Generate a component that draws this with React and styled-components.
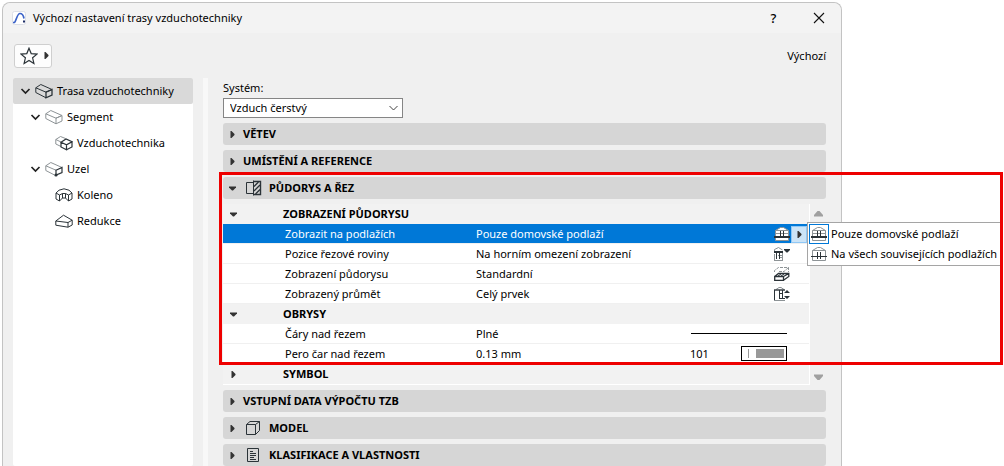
import React from 'react'
import styled, { createGlobalStyle, css } from 'styled-components'

const colors = {
  text: '#000000',
  panel: '#f0f0f0',
  header: '#d6d6d6',
  selected: '#d9d9d9',
  blue: '#0078d7',
  red: '#ee0000',
  ink: '#2b3338',
  inkLight: '#8d9396'
}

const tree = [
  { label: 'Trasa vzduchotechniky', level: 0, open: true, selected: true, icon: 'duct' },
  { label: 'Segment', level: 1, open: true, icon: 'segment' },
  { label: 'Vzduchotechnika', level: 2, icon: 'hvac' },
  { label: 'Uzel', level: 1, open: true, icon: 'node' },
  { label: 'Koleno', level: 2, icon: 'elbow' },
  { label: 'Redukce', level: 2, icon: 'reducer' }
]

const GlobalStyle = createGlobalStyle`
  * {
    box-sizing: border-box;
  }
  body {
    margin: 0;
    background: #fff;
    overflow: hidden;
  }
  body, button, select {
    font-family: 'Noto Sans', 'Open Sans', sans-serif;
    font-size: 11px;
    line-height: 16px;
    color: ${colors.text};
  }
`

const Icon = ({ name }) => {
  switch (name) {
    case 'duct':
      return (
        <Svg width='18' height='16' viewBox='0 0 18 16'>
          <path d='M.8 4.8 5.8 1.5 17 6.5 11 9.2zM.8 4.8V9.5L11 14.8' />
          <path d='M11 9.2 17 6.5V12L11 14.8z' strokeWidth='1.3' />
        </Svg>
      )
    case 'segment':
      return (
        <Svg width='18' height='16' viewBox='0 0 18 16' $light>
          <path d='M.8 4.8 5.8 1.5 17 6.5 11 9.2zM.8 4.8V9.5L11 14.8' />
          <path d='M11 9.2 17 6.5V12L11 14.8z' />
        </Svg>
      )
    case 'hvac':
      return (
        <Svg width='18' height='16' viewBox='0 0 18 16'>
          <path stroke={colors.inkLight} d='M6 11.5.8 9V4.5L5.5 1.5 10.5 3.5M.8 4.5 6 7' />
          <path d='M6 7.2 11 4 17 6.8 11.5 9.8zM6 7.2V12L11.5 14.8V9.8M11.5 14.8 17 12V6.8' strokeWidth='1.2' />
        </Svg>
      )
    case 'node':
      return (
        <Svg width='18' height='16' viewBox='0 0 18 16'>
          <path stroke={colors.inkLight} d='M11 9.2.8 4.8 5.8 1.5 17 6.5M.8 4.8V9.5L9.5 14' />
          <path d='M11 9.2 17 6.5V11.5L11 14z' strokeWidth='1.2' />
          <circle cx='11' cy='14' r='1.6' fill={colors.ink} stroke='none' />
        </Svg>
      )
    case 'elbow':
      return (
        <Svg width='18' height='16' viewBox='0 0 18 16'>
          <path d='M1 6 4 3.2 9 1.8 14 3.2 17 6V12L13.5 14 10.5 11H7.5L4.5 14 1 12z' />
          <path d='M1 6 4.5 8 7.5 6.5H10.5L13.5 8 17 6M4.5 8V14M13.5 8V14M7.5 6.5V11M10.5 6.5V11' />
        </Svg>
      )
    case 'reducer':
      return (
        <Svg width='18' height='16' viewBox='0 0 18 16'>
          <path d='M.8 8 8.5 2.2 17.2 7.2V12L13 14.2.8 12.2zM.8 8 13 9.5 17.2 7.2M13 9.5V14.2' />
        </Svg>
      )
    case 'plan':
      return (
        <Svg width='17' height='16' viewBox='0 0 17 16'>
          <path d='M8 2.5H1.5V13.5H8M8.5 .5V15.5' />
          <path d='M8.5 1.5H15.5V14.5H8.5' strokeWidth='1.4' />
          <path d='M9 6.5 13.5 2M9 11 15 5M10.5 14 15 9.5' strokeWidth='1.3' />
        </Svg>
      )
    case 'cube':
      return (
        <Svg width='17' height='16' viewBox='0 0 17 16'>
          <path d='M1.5 4.5H10.5V14.5H1.5zM1.5 4.5 5 1.5H14.5L10.5 4.5M14.5 1.5V10.5L10.5 14.5' />
        </Svg>
      )
    case 'list':
      return (
        <Svg width='17' height='16' viewBox='0 0 17 16'>
          <path d='M2.5 1.5H13.5V14.5H2.5zM5 4.5H8M5 6.5H11M5 8.5H11M5 10.5H9M5 12.5H11' />
        </Svg>
      )
    case 'story':
      return (
        <Svg width='16' height='16' viewBox='0 0 16 16'>
          <path d='M1.5 14.5V4.5L6.5 1.5H9.5L14.5 4.5V14.5z' stroke={colors.inkLight} />
          <path d='M1.5 4.5H14.5M2 7.5H14' stroke={colors.inkLight} />
          <path d='M6.5 5V10M9.5 5V10' />
          <path d='M0 11H16' strokeWidth='2' />
        </Svg>
      )
    case 'allStories':
      return (
        <Svg width='16' height='16' viewBox='0 0 16 16'>
          <path d='M1.5 14.5V4.5L6.5 1.5H9.5L14.5 4.5V14.5z' stroke={colors.inkLight} />
          <path d='M1.5 4.5H14.5' stroke={colors.inkLight} />
          <path d='M6.5 6V13M9.5 6V13M0 10.5H16' />
        </Svg>
      )
    case 'cut':
      return (
        <Svg width='16' height='16' viewBox='0 0 16 16'>
          <path d='M.5 5V3.5L4.5 1.5 8.5 4M.5 8V14.5M0 14.5H9M5 11.5H9M8.5 7V14.5M4 9.5H8' stroke={colors.inkLight} />
          <path d='M0 6H9' strokeWidth='2' />
          <path d='M2.5 7V13M5.5 7V13' />
          <path d='M10 3H16V4L13.5 6.5H12.5L10 4z' fill={colors.ink} stroke='none' />
        </Svg>
      )
    case 'floor':
      return (
        <Svg width='16' height='16' viewBox='0 0 16 16'>
          <path d='M.5 6V4.5L4.5 1.5H14.5V6' stroke={colors.inkLight} strokeDasharray='3 1' />
          <path d='M5 5.5H10L14.5 1.5' stroke={colors.inkLight} strokeDasharray='3 1' />
          <path d='M.7 10.5H9.5V14.3H.7zM.7 10.5 4.5 7.5H14.8V10.5L9.5 14.3M9.5 10.5 14.8 7.5' strokeWidth='1.3' />
          <path d='M4 10 7 8M7 10 10 8' />
        </Svg>
      )
    case 'projection':
      return (
        <Svg width='16' height='16' viewBox='0 0 16 16'>
          <path d='M2 3.5 5 1.5H7L10 3.5M0 14.5H11' stroke={colors.inkLight} />
          <path d='M0 4H11' strokeWidth='1.4' />
          <path d='M.5 4V14M5.5 4V12M8.5 4V12M5.5 7.5H8.5M5 12.5H11' />
          <path d='M10 7 13 4 16 7zM10 10H16L13 13z' fill={colors.ink} stroke='none' />
        </Svg>
      )
    default:
      return null
  }
}

const Triangle = ({ dir }) => (
  <svg width='9' height='9' viewBox='0 0 9 9' fill='#333'>
    {dir === 'down' ? <path d='M1 2.5H8V3.5L5 6.5H4L1 3.5z' /> : <path d='M2.5 1H3.5L6.5 4V5L3.5 8H2.5z' />}
  </svg>
)

const Section = ({ title, icon, open }) => (
  <SectionHeader aria-expanded={!!open}>
    <Triangle dir={open ? 'down' : 'right'} />
    {icon && <Icon name={icon} />}
    <span>{title}</span>
  </SectionHeader>
)

const GroupRow = ({ title, open }) => (
  <Group>
    <th>
      <GroupToggle aria-label={title} aria-expanded={!!open}>
        <Triangle dir={open ? 'down' : 'right'} />
      </GroupToggle>
    </th>
    <th colSpan='3'>{title}</th>
  </Group>
)

const PropertyRow = ({ name, value, selected, children }) => (
  <Property $selected={selected}>
    <td />
    <td>{name}</td>
    <td>{value}</td>
    <Control>{children}</Control>
  </Property>
)

export default function App () {
  return (
    <Page>
      <GlobalStyle />
      <Dialog>
        <TitleBar>
          <svg width='14' height='14' viewBox='0 0 14 14'>
            <rect x='.5' y='.5' width='13' height='13' rx='2' fill='#fff' stroke='#dcdfe6' />
            <path d='M1 11.5H2.5C4.5 9.500 5 2.500 8 2.500 10.500 2.500 11.500 4.500 12 7.500' fill='none' stroke='#3c63c8' strokeWidth='1.7' />
            <path d='M11 9.5H13V11.5H11z' fill='#1d2c66' />
          </svg>
          <Title>Výchozí nastavení trasy vzduchotechniky</Title>
          <TitleButton aria-label='Nápověda'>
            <HelpMark>?</HelpMark>
          </TitleButton>
          <TitleButton aria-label='Zavřít'>
            <svg width='12' height='12' viewBox='0 0 12 12' fill='none' stroke='#111' strokeWidth='1.1'>
              <path d='M1 1 11 11M11 1 1 11' />
            </svg>
          </TitleButton>
        </TitleBar>

        <Toolbar>
          <FavoriteButton aria-label='Oblíbené'>
            <svg width='18' height='18' viewBox='0 0 18 18' fill='none' stroke={colors.ink} strokeWidth='1.2'>
              <path d='M9 1.2 11.2 6.6 17 7.1 12.6 10.8 13.9 16.4 9 13.4 4.1 16.4 5.4 10.8 1 7.1 6.8 6.6z' />
            </svg>
            <Triangle dir='right' />
          </FavoriteButton>
          <span>Výchozí</span>
        </Toolbar>

        <Body>
          <Tree>
            {tree.map(item => (
              <TreeItem key={item.label} $level={item.level} $selected={item.selected}>
                {item.open && (
                  <svg width='11' height='8' viewBox='0 0 11 8' fill='none' stroke='#222' strokeWidth='1.7'>
                    <path d='M1.5 2 5.5 6 9.5 2' />
                  </svg>
                )}
                <Icon name={item.icon} />
                <span>{item.label}</span>
              </TreeItem>
            ))}
          </Tree>
          <Splitter />
          <Settings>
            <label htmlFor='system'>Systém:</label>
            <SelectBox>
              <select id='system'>
                <option>Vzduch čerstvý</option>
              </select>
              <svg width='11' height='8' viewBox='0 0 11 8' fill='none' stroke='#444'>
                <path d='M1.5 2 5.5 6 9.5 2' />
              </svg>
            </SelectBox>

            <Sections>
              <Section title='VĚTEV' />
              <Section title='UMÍSTĚNÍ A REFERENCE' />
              <OpenSection>
                <Section title='PŮDORYS A ŘEZ' icon='plan' open />
                <Scroller>
                  <Properties>
                    <colgroup>
                      <col width='60' />
                      <col width='191' />
                      <col />
                      <col width='132' />
                    </colgroup>
                    <tbody>
                      <GroupRow title='ZOBRAZENÍ PŮDORYSU' open />
                      <PropertyRow name='Zobrazit na podlažích' value='Pouze domovské podlaží' selected>
                        <IconPlate><Icon name='story' /></IconPlate>
                        <MenuButton aria-label='Zobrazit na podlažích'>
                          <Triangle dir='right' />
                        </MenuButton>
                        <Menu role='menu'>
                          <MenuItem role='menuitem'>
                            <MenuIcon $checked><Icon name='story' /></MenuIcon>
                            Pouze domovské podlaží
                          </MenuItem>
                          <MenuItem role='menuitem'>
                            <MenuIcon><Icon name='allStories' /></MenuIcon>
                            Na všech souvisejících podlažích
                          </MenuItem>
                        </Menu>
                      </PropertyRow>
                      <PropertyRow name='Pozice řezové roviny' value='Na horním omezení zobrazení'>
                        <Icon name='cut' />
                      </PropertyRow>
                      <PropertyRow name='Zobrazení půdorysu' value='Standardní'>
                        <Icon name='floor' />
                      </PropertyRow>
                      <PropertyRow name='Zobrazený průmět' value='Celý prvek'>
                        <Icon name='projection' />
                      </PropertyRow>
                      <GroupRow title='OBRYSY' open />
                      <PropertyRow name='Čáry nad řezem' value='Plné'>
                        <LineSample />
                      </PropertyRow>
                      <PropertyRow name='Pero čar nad řezem' value='0.13 mm'>
                        <Pen>
                          <span>101</span>
                          <PenSwatch />
                        </Pen>
                      </PropertyRow>
                      <GroupRow title='SYMBOL' />
                    </tbody>
                  </Properties>
                  <ScrollBar>
                    <svg width='9' height='7' viewBox='0 0 9 7' fill='#a0a0a0'>
                      <path d='M0 6.5V5L3.5 1H5.5L9 5V6.5z' />
                    </svg>
                    <svg width='9' height='7' viewBox='0 0 9 7' fill='#a0a0a0'>
                      <path d='M0 .5V2L3.5 6H5.5L9 2V.5z' />
                    </svg>
                  </ScrollBar>
                </Scroller>
                <Highlight />
              </OpenSection>
              <Section title='VSTUPNÍ DATA VÝPOČTU TZB' />
              <Section title='MODEL' icon='cube' />
              <Section title='KLASIFIKACE A VLASTNOSTI' icon='list' />
            </Sections>
          </Settings>
        </Body>
      </Dialog>
    </Page>
  )
}

const Svg = styled.svg`
  display: block;
  flex: none;
  fill: none;
  stroke: ${({ $light }) => $light ? colors.inkLight : colors.ink};
`

const Page = styled.div`
  height: 100vh;
  padding: 2px 162px 0 2px;
  overflow: hidden;
`

const Dialog = styled.div`
  display: flex;
  flex-direction: column;
  height: 100%;
  background: ${colors.panel};
  border: 1px solid #c3c3c3;
  border-bottom: 0;
  border-radius: 8px 8px 0 0;
`

const TitleBar = styled.header`
  display: flex;
  align-items: center;
  flex: none;
  height: 30px;
  padding-left: 9px;
  background: #f3f3f3;
  border-radius: 8px 8px 0 0;
`

const Title = styled.h1`
  flex: 1;
  margin: 0 0 0 7px;
  font-size: 11px;
  font-weight: normal;
`

const TitleButton = styled.button`
  display: flex;
  align-items: center;
  justify-content: center;
  width: 45px;
  height: 30px;
  padding: 0;
  border: 0;
  background: none;
`

const HelpMark = styled.span`
  font-size: 13px;
  font-weight: 500;
`

const Toolbar = styled.div`
  display: flex;
  align-items: center;
  justify-content: space-between;
  flex: none;
  height: 45px;
  padding: 0 15px 0 11px;
`

const FavoriteButton = styled.button`
  display: flex;
  align-items: center;
  gap: 4px;
  width: 38px;
  height: 24px;
  padding: 0 0 0 5px;
  background: #fdfdfd;
  border: 1px solid #cfcfcf;
  border-radius: 3px;
`

const Body = styled.div`
  display: flex;
  flex: 1;
  min-height: 0;
  padding: 0 15px 0 10px;
`

const Tree = styled.ul`
  flex: 0 0 180px;
  margin: 0;
  padding: 0;
  list-style: none;
  background: #fff;
  border-radius: 2px;
`

const TreeItem = styled.li`
  display: flex;
  align-items: center;
  gap: 4px;
  height: 26px;
  padding-left: ${({ $level }) => [7, 17, 42][$level]}px;
  background: ${({ $selected }) => $selected ? colors.selected : 'none'};
  border-radius: 2px;
`

const Splitter = styled.div`
  flex: none;
  width: 5px;
  margin: 0 15px 0 10px;
  background: #f8f8f8;
`

const Settings = styled.main`
  flex: 1;
  min-width: 0;

  label {
    display: block;
    height: 20px;
    line-height: 20px;
  }
`

const SelectBox = styled.div`
  display: flex;
  align-items: center;
  width: 180px;
  height: 20px;
  background: #fff;
  border: 1px solid #858585;

  select {
    flex: 1;
    height: 18px;
    padding: 0 6px;
    border: 0;
    background: none;
    appearance: none;
  }

  svg {
    margin-right: 3px;
    pointer-events: none;
  }
`

const Sections = styled.div`
  display: flex;
  flex-direction: column;
  gap: 5px;
  margin-top: 5px;
`

const SectionHeader = styled.button`
  display: flex;
  align-items: center;
  flex: none;
  width: 100%;
  height: 22px;
  padding: 0 5px;
  background: ${colors.header};
  border: 0;
  border-radius: 3px;
  font-weight: bold;

  > svg + svg {
    margin: 0 1px 0 8px;
  }

  > span {
    margin-left: 6px;
  }
`

const OpenSection = styled.section`
  position: relative;
`

const Scroller = styled.div`
  display: flex;
  margin-top: 5px;
`

const Properties = styled.table`
  flex: 1;
  table-layout: fixed;
  border-collapse: separate;
  border-spacing: 0;
  border-right: 1px solid #fff;
  border-bottom: 1px solid #fff;

  td, th {
    height: 20px;
    padding: 0 0 0 2px;
    line-height: 18px;
    white-space: nowrap;
  }
`

const Group = styled.tr`
  background: #f2f2f2;
  text-align: left;

  th {
    padding: 0;
  }
`

const GroupToggle = styled.button`
  display: flex;
  margin-left: 6px;
  padding: 0;
  border: 0;
  background: none;
`

const Property = styled.tr`
  background: #fff;

  td {
    border-bottom: 1px solid ${colors.panel};
  }

  ${({ $selected }) => $selected && css`
    background: ${colors.blue};

    td {
      color: #fff;
    }
  `}
`

const Control = styled.td`
  position: relative;

  > svg {
    margin-left: 95px;
  }
`

const IconPlate = styled.span`
  display: inline-block;
  width: 16px;
  margin-left: 95px;
  vertical-align: middle;

  path:first-child {
    fill: #fff;
  }
`

const MenuButton = styled.button`
  display: inline-flex;
  align-items: center;
  justify-content: center;
  width: 16px;
  height: 17px;
  margin-left: 1px;
  padding: 0;
  vertical-align: middle;
  background: #cce4f7;
  border: 1px solid #90c8f6;
`

const Menu = styled.div`
  position: absolute;
  z-index: 1;
  top: -2px;
  left: calc(100% - 2px);
  width: 196px;
  padding: 1px;
  background: #fff;
  border: 1px solid #a5a5a5;
`

const MenuItem = styled.button`
  display: flex;
  align-items: center;
  gap: 2px;
  width: 100%;
  height: 20px;
  padding: 0;
  border: 0;
  background: none;
  white-space: nowrap;
`

const MenuIcon = styled.span`
  padding: 1px;
  border: 1px solid ${({ $checked }) => $checked ? colors.blue : 'transparent'};
`

const LineSample = styled.div`
  width: 96px;
  height: 1px;
  margin-left: 12px;
  background: #000;
`

const Pen = styled.div`
  display: flex;
  align-items: center;
  justify-content: space-between;
  width: 97px;
  height: 18px;
  margin-left: 11px;
`

const PenSwatch = styled.span`
  width: 46px;
  height: 15px;
  padding: 2px;
  background: linear-gradient(90deg, transparent 4px, #999 4px 5px, transparent 5px 12px, #999 12px) content-box #fff;
  border: 1px solid #000;
`

const ScrollBar = styled.div`
  display: flex;
  flex-direction: column;
  align-items: center;
  justify-content: space-between;
  width: 16px;
  padding: 6px 0 4px;
`

// marks the part of the dialog the reader should look at
const Highlight = styled.div`
  position: absolute;
  z-index: 2;
  top: -5px;
  right: -177px;
  bottom: 20px;
  left: -4px;
  border: 3px solid ${colors.red};
  pointer-events: none;
`
